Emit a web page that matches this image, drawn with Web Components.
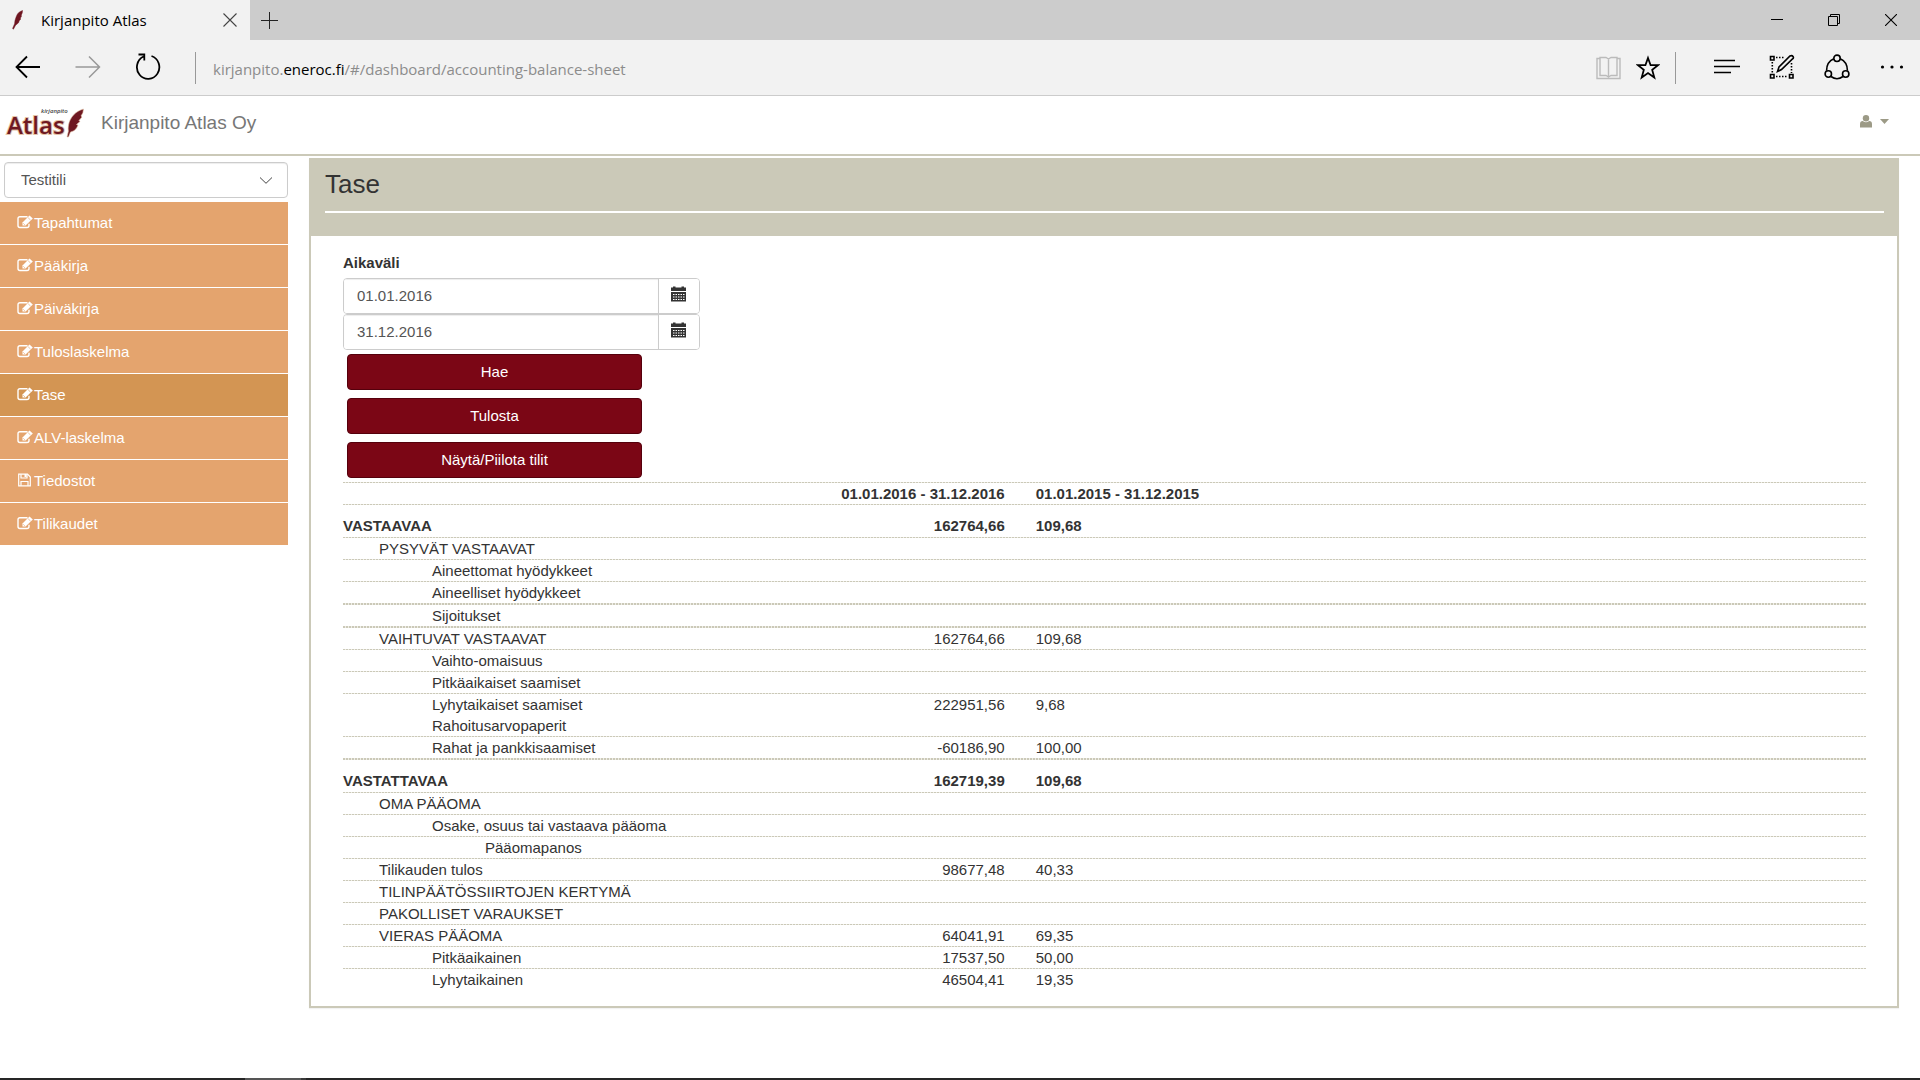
<!DOCTYPE html>
<html lang="fi">
<head>
<meta charset="utf-8">
<title>Kirjanpito Atlas</title>
<style>
  html, body { margin: 0; height: 100%; }
  body { font-family: "Liberation Sans", Arial, sans-serif; font-size: 15px; line-height: 21px; color: #333; background: #fff; }
</style>
</head>
<body>
<atlas-app></atlas-app>

<script>
function define(name, html) {
  const tpl = document.createElement('template');
  tpl.innerHTML = '<style>*{box-sizing:border-box}</style>' + html;
  customElements.define(name, class extends HTMLElement {
    connectedCallback() {
      if (this.shadowRoot) return;
      this.attachShadow({ mode: 'open' }).append(tpl.content.cloneNode(true));
    }
  });
}

/* ---------- browser frame ---------- */
define('browser-tabs', `
<style>
  :host { display: flex; height: 40px; background: #ccc; font-family: "Open Sans", sans-serif; font-size: 15px; color: #000; }
  .tab { display: flex; align-items: center; width: 250px; background: #f2f2f2; padding: 0 12px; gap: 12px; }
  .tab span { flex: 1; }
  button { display: flex; align-items: center; justify-content: center; border: 0; background: none; padding: 0; }
  .close { width: 16px; }
  .plus { width: 38px; }
  .win { display: flex; margin-left: auto; padding-right: 1px; }
  .win button { width: 57px; }
  svg { display: block; }
</style>
<div class="tab">
  <svg width="17" height="20" viewBox="0 0 17 20"><path d="M10.500 .5Q7 1.500 5.500 4L4.200 6.800L3 10.500L2.600 13.800L.6 18.500L1.400 19.200L3.600 15.200L6.500 12.800L7.200 10.800L8.800 9L8.300 8.200L9.600 6L9.200 5.200Q10.600 3 10.500 .5Z" fill="#6e1520" stroke="#6e1520" stroke-width=".5"/></svg>
  <span>Kirjanpito Atlas</span>
  <button class="close" aria-label="Sulje välilehti"><svg width="14" height="14" viewBox="0 0 14 14"><path d="M.5 .5L13.500 13.500M13.500 .5L.5 13.500" stroke="#444" stroke-width="1.100"/></svg></button>
</div>
<button class="plus" aria-label="Uusi välilehti"><svg width="17" height="17" viewBox="0 0 17 17"><path d="M0 8.500H17M8.500 0V17" stroke="#222"/></svg></button>
<div class="win">
  <button aria-label="Pienennä"><svg width="12" height="12" viewBox="0 0 12 12"><path d="M0 5.500H12" stroke="#000"/></svg></button>
  <button aria-label="Palauta"><svg width="12" height="12" viewBox="0 0 12 12" fill="none" stroke="#000"><path d="M.5 2.500H9.500V11.500H.5ZM2.500 2.500V.5H11.500V9.500H9.500"/></svg></button>
  <button aria-label="Sulje"><svg width="12" height="12" viewBox="0 0 12 12"><path d="M0 0L12 12M12 0L0 12" stroke="#000" stroke-width="1.100"/></svg></button>
</div>`);

define('browser-toolbar', `
<style>
  :host { display: flex; align-items: center; height: 56px; background: #f2f2f2; border-bottom: 1px solid #ccc; font-family: "Open Sans", sans-serif; font-size: 15px; }
  button { display: flex; align-items: center; justify-content: center; border: 0; background: none; padding: 0 0 2px; width: 56px; height: 40px; }
  nav { display: flex; gap: 4px; padding-right: 19px; }
  .sep { width: 1px; height: 32px; background: #999; }
  .url { flex: 1; padding-left: 17px; padding-top: 4px; color: #8c8c8c; }
  .url b { font-weight: 400; color: #000; }
  .near { display: flex; padding-right: 7px; }
  .near button { width: 40px; padding-bottom: 0; }
  .tools { display: flex; padding: 0 1px 0 23px; }
  .tools button { width: 55px; }
  svg { display: block; fill: none; stroke: #000; }
</style>
<nav>
  <button aria-label="Takaisin"><svg width="26" height="24" viewBox="0 0 26 24" stroke-width="1.800"><path d="M1.500 12H25M12 1.500L1.500 12L12 22.500"/></svg></button>
  <button aria-label="Eteenpäin"><svg width="26" height="24" viewBox="0 0 26 24" stroke-width="1.500" style="stroke:#999"><path d="M.5 12H24M14 1.500L24.500 12L14 22.500"/></svg></button>
  <button aria-label="Päivitä"><svg width="26" height="28" viewBox="0 0 26 28" stroke-width="1.800"><path d="M16.500 3A11.200 11.700 0 1 1 8.500 3.500M3.500 1.500H9.300V7.500"/></svg></button>
</nav>
<div class="sep"></div>
<div class="url">kirjanpito.<b>eneroc.fi</b>/#/dashboard/accounting-balance-sheet</div>
<div class="near">
  <button aria-label="Lukunäkymä"><svg width="25" height="24" viewBox="0 0 25 24" stroke-width="1.400" style="stroke:#bbb"><path d="M4 2.500H1V22.500H24V2.500H21M4 1.500H10L12.500 3L15 1.500H21V19.500H15L12.500 21L10 19.500H4ZM12.500 3V21"/></svg></button>
  <button aria-label="Suosikki"><svg width="24" height="26" viewBox="0 0 24 26" stroke-width="1.800"><path d="M12 3L14.600 10.200H22L16.200 14.900L18.300 22.500L12 18.100L5.700 22.500L7.800 14.900L2 10.200H9.400Z"/></svg></button>
</div>
<div class="sep"></div>
<div class="tools">
  <button aria-label="Keskus"><svg width="26" height="16" viewBox="0 0 26 16" stroke-width="1.500"><path d="M0 1.500H21M0 7.500H26M0 13.500H17"/></svg></button>
  <button aria-label="Muistiinpano"><svg width="26" height="26" viewBox="0 0 26 26" stroke-width="1.600"><path d="M1.500 2.500H5V6H1.500ZM1.500 20.500H5V24H1.500ZM20.500 20.500H24V24H20.500Z"/><path d="M7 3.500H15M3.300 8V19M7 22.500H19M22.500 9V19" stroke-dasharray="1.500 1.500"/><path d="M8.500 17.500L10 13L21 2Q23 1 24 2.500Q25 4 23.500 5L12.500 15.500Z"/></svg></button>
  <button aria-label="Jaa"><svg width="26" height="26" viewBox="0 0 26 26" stroke-width="1.600"><circle cx="13" cy="4.300" r="3.200"/><circle cx="4.300" cy="20" r="3.200"/><circle cx="21.700" cy="20" r="3.200"/><path d="M9.800 4.800Q2.500 8 2.600 16.800M16.200 4.800Q23.500 8 23.400 16.800M7 22.500Q13 27 19 22.500"/></svg></button>
  <button aria-label="Lisää"><svg width="24" height="6" viewBox="0 0 24 6" style="fill:#000;stroke:none"><circle cx="2.500" cy="3" r="1.600"/><circle cx="12" cy="3" r="1.600"/><circle cx="21.500" cy="3" r="1.600"/></svg></button>
</div>`);

/* ---------- application header ---------- */
define('atlas-logo', `
<style>
  :host { display: block; }
  svg { display: block; overflow: visible; }
</style>
<svg width="80" height="32" viewBox="0 0 80 32" role="img" aria-label="Kirjanpito Atlas">
  <text x="1" y="27" font-family="Open Sans, sans-serif" font-weight="600" font-size="24" fill="#6e1822" stroke="#e3c3a8" stroke-width="2" paint-order="stroke">Atlas</text>
  <text x="35" y="6" font-family="Open Sans, sans-serif" font-style="italic" font-size="6" font-weight="600" fill="#444">kirjanpito</text>
  <path d="M77.500 2C70 4 64 10 62.500 18C62 21 62.200 23 62.400 24L61 30L62.500 30L64.500 25C69 24 71 21 72 18L70.500 17.500L74 14.500L73 13.500L76 10L75 9Q77.500 6 77.500 2Z" fill="#6e1822" stroke="#e3c3a8" stroke-width=".6"/>
</svg>`);

define('app-header', `
<style>
  :host { display: flex; align-items: center; height: 60px; border-bottom: 2px solid #cbc9b8; padding: 0 31px 0 6px; }
  .brand { flex: 1; padding: 0 0 6px 15px; font-size: 19px; line-height: 21px; color: #777; }
  atlas-logo { padding-bottom: 4px; }
  button { display: flex; align-items: center; gap: 8px; border: 0; background: none; padding: 0 0 7px; }
  svg { display: block; fill: #9c9a86; }
</style>
<atlas-logo></atlas-logo>
<div class="brand">Kirjanpito Atlas Oy</div>
<button aria-label="Käyttäjä">
  <svg width="12" height="13" viewBox="0 0 12 13"><circle cx="6" cy="3.300" r="3.200"/><path d="M0 12.500V9Q0 6.200 2.800 6Q6 8.600 9.200 6Q12 6.200 12 9V12.500Z"/></svg>
  <svg width="9" height="5" viewBox="0 0 9 5"><path d="M0 0H9L4.500 5Z"/></svg>
</button>`);

/* ---------- sidebar ---------- */
define('account-select', `
<style>
  :host { display: block; padding: 6px 0 4px 4px; }
  .box { display: grid; align-items: center; }
  .box > * { grid-area: 1 / 1; }
  select { appearance: none; width: 100%; height: 36px; padding: 0 16px 2px; border: 1px solid #ccc; border-radius: 4px; background: #fff; box-shadow: inset 0 1px 1px rgba(0,0,0,.075); font: inherit; color: #555; }
  svg { justify-self: end; margin-right: 16px; pointer-events: none; }
</style>
<div class="box">
  <select aria-label="Tili"><option>Testitili</option></select>
  <svg width="12" height="7" viewBox="0 0 12 7"><path d="M0 .5L6 6.300L12 .5" fill="none" stroke="#444"/></svg>
</div>`);

define('menu-link', `
<style>
  :host { display: block; --bg: #e4a46e; }
  :host([active]) { --bg: #d39553; }
  a { display: flex; align-items: center; gap: 1px; height: 42px; padding: 0 17px 2px; background: var(--bg); color: #fff; text-decoration: none; }
  svg { display: block; fill: none; stroke: #fff; }
  .save { display: none; }
  :host([icon="save"]) .save { display: block; }
  :host([icon="save"]) .edit { display: none; }
</style>
<a href="#">
  <svg class="edit" width="16" height="14" viewBox="0 0 16 14"><path d="M10.500 1.700H3Q1 1.700 1 3.700V10.500Q1 12.500 3 12.500H10Q12 12.500 12 10.500V8.800" stroke-width="1.400"/><path d="M5.500 10.500V7.500L12.500 .5L15.800 3.500L8.600 10.500Z" fill="#fff" stroke="none"/><path d="M11.200 2.800L13.500 5M6.300 8.300L7.800 9.800" stroke="var(--bg)" stroke-width=".7"/></svg>
  <svg class="save" width="16" height="14" viewBox="0 0 16 14"><path d="M1.700 1.200H10.500L13.300 4V12.800H1.700Z" stroke-width="1.200"/><path d="M4 1.200V5H10V1.200M4 12.800V8.500H11V12.800" stroke-width="1.200"/><path d="M7.500 1H9.500V4H7.500Z" fill="#fff" stroke="none"/></svg>
  <slot></slot>
</a>`);

define('side-menu', `
<style>
  :host { display: block; width: 288px; flex: none; }
  nav { display: flex; flex-direction: column; gap: 1px; }
</style>
<account-select></account-select>
<nav>
  <menu-link>Tapahtumat</menu-link>
  <menu-link>Pääkirja</menu-link>
  <menu-link>Päiväkirja</menu-link>
  <menu-link>Tuloslaskelma</menu-link>
  <menu-link active>Tase</menu-link>
  <menu-link>ALV-laskelma</menu-link>
  <menu-link icon="save">Tiedostot</menu-link>
  <menu-link>Tilikaudet</menu-link>
</nav>`);

/* ---------- content ---------- */
customElements.define('date-field', class extends HTMLElement {
  connectedCallback() {
    if (this.shadowRoot) return;
    this.attachShadow({ mode: 'open' }).innerHTML = `
<style>
  * { box-sizing: border-box; }
  :host { display: flex; height: 36px; border: 1px solid #ccc; border-radius: 4px; background: #fff; overflow: hidden; }
  input { flex: 1; min-width: 0; border: 0; padding: 0 13px 2px; font: inherit; color: #555; box-shadow: inset 0 1px 1px rgba(0,0,0,.075); }
  button { display: flex; align-items: center; justify-content: center; width: 41px; border: 0; border-left: 1px solid #ccc; background: #fff; padding: 0 2px 4px 0; }
</style>
<input type="text" aria-label="${this.getAttribute('label')}" value="${this.getAttribute('value')}">
<button aria-label="Avaa kalenteri"><svg width="15" height="16" viewBox="0 0 15 16"><path d="M0 1.500H2V.5H4.500V1.500H10.500V.5H13V1.500H15V5H0ZM0 6H15V15.500H0Z" fill="#333"/><path d="M2 8.500H14M2 11H14M2 13.500H14" stroke="#fff" stroke-dasharray="1.500 1"/></svg></button>`;
  }
});

define('action-button', `
<style>
  :host { display: block; }
  button { display: block; width: 100%; height: 36px; border: 1px solid #55000c; border-radius: 4px; background: #7b0615; color: #fff; font: inherit; padding: 0 0 2px; }
</style>
<button><slot></slot></button>`);

/* level, label, current, previous, extra classes */
const ROWS = [
  ['l0', 'VASTAAVAA', '162764,66', '109,68', 'total'],
  ['l1', 'PYSYVÄT VASTAAVAT'],
  ['l2', 'Aineettomat hyödykkeet'],
  ['l2', 'Aineelliset hyödykkeet'],
  ['l2', 'Sijoitukset', '', '', 'thick'],
  ['l1', 'VAIHTUVAT VASTAAVAT', '162764,66', '109,68', 'thick'],
  ['l2', 'Vaihto-omaisuus'],
  ['l2', 'Pitkäaikaiset saamiset'],
  ['l2', 'Lyhytaikaiset saamiset', '222951,56', '9,68'],
  ['l2', 'Rahoitusarvopaperit', '', '', 'plain'],
  ['l2', 'Rahat ja pankkisaamiset', '-60186,90', '100,00'],
  ['l0', 'VASTATTAVAA', '162719,39', '109,68', 'total thick'],
  ['l1', 'OMA PÄÄOMA'],
  ['l2', 'Osake, osuus tai vastaava pääoma'],
  ['l3', 'Pääomapanos'],
  ['l1', 'Tilikauden tulos', '98677,48', '40,33'],
  ['l1', 'TILINPÄÄTÖSSIIRTOJEN KERTYMÄ'],
  ['l1', 'PAKOLLISET VARAUKSET'],
  ['l1', 'VIERAS PÄÄOMA', '64041,91', '69,35'],
  ['l2', 'Pitkäaikainen', '17537,50', '50,00'],
  ['l2', 'Lyhytaikainen', '46504,41', '19,35'],
];
define('balance-table', `
<style>
  :host { display: block; }
  table { width: 100%; table-layout: fixed; border-collapse: separate; border-spacing: 0; }
  .c1 { width: 28%; } .c2 { width: 16.500%; }
  tr { --line: 1px; background: repeating-linear-gradient(90deg, #cbc9b8 0 2px, #eeede6 2px 3px) top / 100% var(--line) no-repeat; }
  tr.thick { --line: 2px; }
  tr.plain { --line: 0px; }
  th, td { padding: var(--line) 0 0; height: calc(21px + var(--line)); line-height: 21px; font-weight: 400; text-align: left; white-space: nowrap; }
  .total > * { padding-top: calc(10px + var(--line)); padding-bottom: 1px; font-weight: 700; }
  thead th { font-weight: 700; }
  tr > :nth-child(2) { text-align: right; padding-right: 16px; }
  tr > :nth-child(3) { padding-left: 15px; }
  .l1 { padding-left: 36px; } .l2 { padding-left: 89px; } .l3 { padding-left: 142px; }
</style>
<table>
  <colgroup><col class="c1"><col class="c2"><col></colgroup>
  <thead><tr><td></td><th scope="col">01.01.2016 - 31.12.2016</th><th scope="col">01.01.2015 - 31.12.2015</th></tr></thead>
  <tbody>${ROWS.map(([lv, name, a = '', b = '', cls = '']) => `<tr class="${cls}"><th scope="row" class="${lv}">${name}</th><td>${a}</td><td>${b}</td></tr>`).join('')}</tbody>
</table>`);

define('content-panel', `
<style>
  :host { display: block; border: 2px solid #cbc9b8; border-top: 0; box-shadow: 0 1px 1px rgba(0,0,0,.05); }
  header { background: #cbc9b8; height: 78px; padding: 12px 13px 0 14px; }
  h1 { margin: 0 0 13px; font-size: 26px; line-height: 28px; font-weight: 400; }
  hr { margin: 0; border: 0; height: 2px; background: #fff; }
  section { padding: 16px 31px 16px 32px; }
</style>
<header><h1><slot name="title"></slot></h1><hr></header>
<section><slot></slot></section>`);

define('balance-form', `
<style>
  :host { display: block; padding-bottom: 4px; }
  fieldset { border: 0; margin: 0; padding: 0; width: 357px; }
  legend { font-weight: 700; padding: 0 0 5px; line-height: 21px; }
  .actions { display: flex; flex-direction: column; gap: 8px; width: 295px; margin: 4px 0 0 4px; }
</style>
<fieldset>
  <legend>Aikaväli</legend>
  <date-field label="Alkupäivä" value="01.01.2016"></date-field>
  <date-field label="Loppupäivä" value="31.12.2016"></date-field>
</fieldset>
<div class="actions">
  <action-button>Hae</action-button>
  <action-button>Tulosta</action-button>
  <action-button>Näytä/Piilota tilit</action-button>
</div>`);

define('atlas-app', `
<style>
  :host { display: flex; flex-direction: column; min-height: 100vh; }
  main { display: flex; flex: 1; align-items: flex-start; gap: 21px; padding-right: 21px; }
  content-panel { flex: 1; margin-top: 2px; }
  footer { height: 2px; background: linear-gradient(90deg, #262626 245px, #555 245px 301px, #3a3a3a 301px 306px, #262626 306px); }
</style>
<browser-tabs></browser-tabs>
<browser-toolbar></browser-toolbar>
<app-header></app-header>
<main>
  <side-menu></side-menu>
  <content-panel>
    <span slot="title">Tase</span>
    <balance-form></balance-form>
    <balance-table></balance-table>
  </content-panel>
</main>
<footer></footer>`);
</script>
</body>
</html>
